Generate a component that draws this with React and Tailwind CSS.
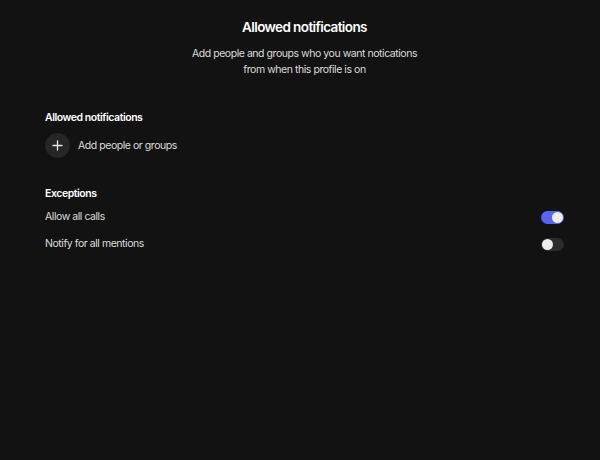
import React, { useState } from 'react';

const Toggle = ({ on, onChange }) => (
    <button
        onClick={onChange}
        className={`relative w-[23px] h-[13px] rounded-full transition-colors ${on ? 'bg-[#5865f2]' : 'bg-[#2b2b2b]'}`}
    >
        <span
            className={`absolute top-[1px] w-[11px] h-[11px] rounded-full bg-[#ececec] transition-all ${on ? 'left-[11px]' : 'left-[1px]'}`}
        />
    </button>
);

const App = () => {
    const [calls, setCalls] = useState(true);
    const [mentions, setMentions] = useState(false);

    return (
        <div className="w-[600px] h-[460px] bg-[#121212] text-[#e6e6e6] font-['Inter',sans-serif] pl-[45px] pr-[36px] pt-[18px]">
            <div className="flex flex-col items-center">
                <h1 className="text-[13.5px] font-semibold tracking-[-0.6px] text-white leading-[18px]">Allowed notifications</h1>
                <p className="mt-[10px] text-[10.5px] tracking-[-0.45px] leading-[16px] text-center text-[#dcdcdc]">
                    Add people and groups who you want notications
                    <br />
                    from when this profile is on
                </p>
            </div>

            <div className="mt-[33px] text-[10.5px] tracking-[-0.45px]">
                <h2 className="font-semibold text-white leading-[14px]">Allowed notifications</h2>
                <button className="mt-[8px] flex items-center gap-[8px]">
                    <span className="w-[25px] h-[25px] rounded-full bg-[#262626] flex items-center justify-center">
                        <svg width="11" height="11" viewBox="0 0 11 11" stroke="#e6e6e6" strokeWidth="1.3" strokeLinecap="round">
                            <path d="M5.5 1v9M1 5.5h9" />
                        </svg>
                    </span>
                    <span className="text-[#dcdcdc]">Add people or groups</span>
                </button>

                <h2 className="mt-[29px] font-semibold text-white leading-[14px]">Exceptions</h2>
                <div className="mt-[9px] flex items-center justify-between h-[14px]">
                    <span className="text-[#dcdcdc]">Allow all calls</span>
                    <Toggle on={calls} onChange={() => setCalls(!calls)} />
                </div>
                <div className="mt-[13px] flex items-center justify-between h-[14px]">
                    <span className="text-[#dcdcdc]">Notify for all mentions</span>
                    <Toggle on={mentions} onChange={() => setMentions(!mentions)} />
                </div>
            </div>
        </div>
    );
};

export default App;
